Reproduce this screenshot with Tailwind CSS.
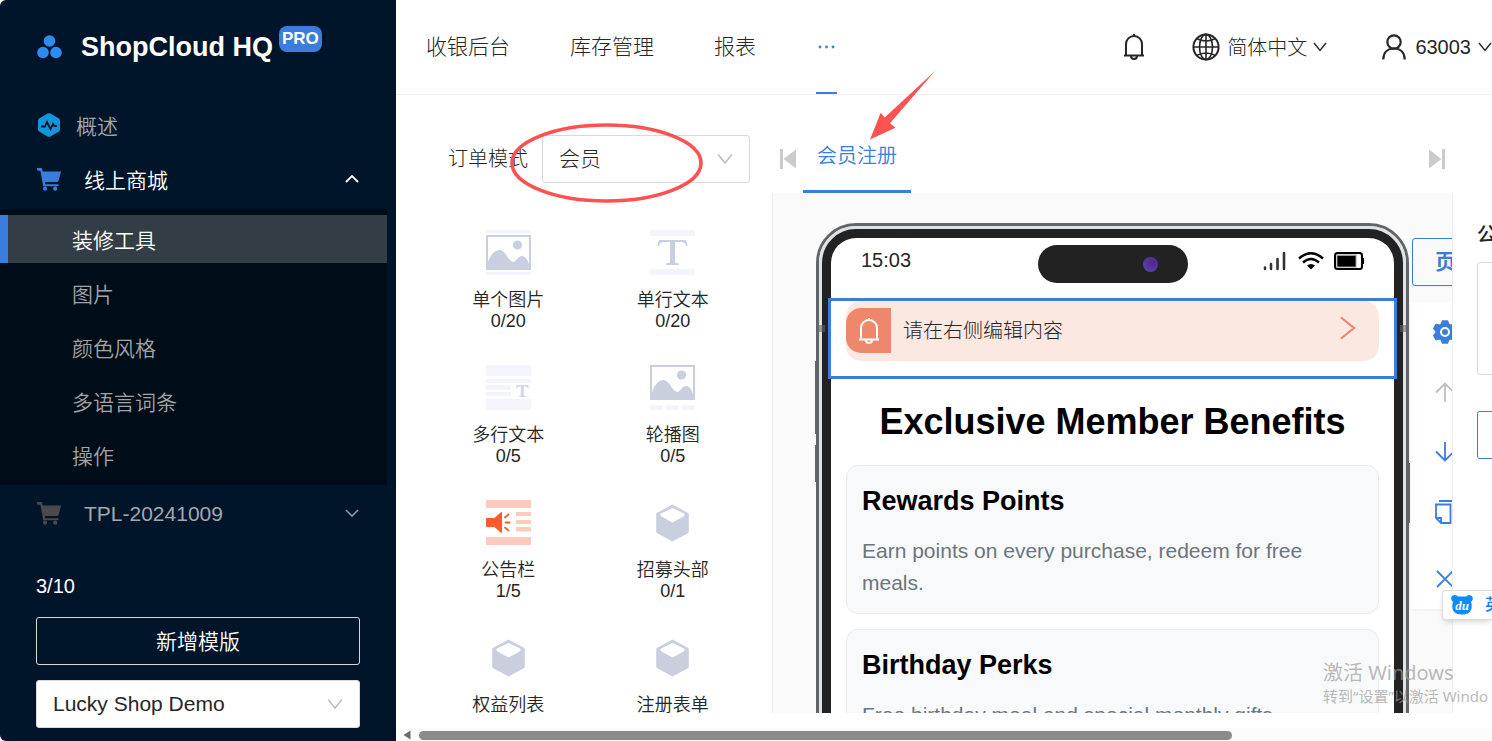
<!DOCTYPE html>
<html lang="zh-CN">
<head>
<meta charset="utf-8">
<title>ShopCloud HQ</title>
<script src="https://cdn.jsdelivr.net/npm/@tailwindcss/browser@4"></script>
</head>
<body class="relative flex h-screen overflow-hidden bg-white font-['Liberation_Sans','Noto_Sans_CJK_SC',sans-serif] font-light text-[#262626]">

<svg class="hidden">
  <symbol id="cart" viewBox="0 0 24 23"><path d="M0 0h4.200q.8 0 1 .8L5.700 3.500H24l-2.300 9a2 2 0 0 1-1.900 1.500H8l.3 2.200h13.200v2H6.200L3.400 2.800H.8Q0 2.400 0 1.500z"/><circle cx="8" cy="20.700" r="2.100"/><circle cx="18.200" cy="20.700" r="2.100"/></symbol>
  <symbol id="down" viewBox="0 0 14 10"><path d="M1 1l6 7.500L13 1" fill="none" stroke="currentColor" stroke-width="1.400"/></symbol>
  <symbol id="bell" viewBox="0 0 22 28"><path d="M11 1v2M3 22.500V11a8 8 0 0 1 16 0v11.500M1 22.500h20M8 23a3 3 0 0 0 6 0" fill="none" stroke="currentColor" stroke-width="2"/></symbol>
  <symbol id="cube" viewBox="0 0 45 45"><path fill="#cacfe0" fill-rule="evenodd" d="M22.500 4.600l15.300 8.200q1 .6 1 1.800v17q0 1.100-1 1.700l-15.300 8.300-15.300-8.300q-1-.6-1-1.700v-17q0-1.200 1-1.800zM22.500 8L11 13.500q-.8.600-.5 1.500.2 1 1 1.500L22.500 22.500l11-6q.8-.5 1-1.500.3-.9-.5-1.500z"/></symbol>
  <symbol id="photo" viewBox="0 0 45 35"><path d="M1 1h43v33H1z" fill="none" stroke="#cacfe0" stroke-width="2"/><path d="M2 27C5 19 9 15 13.500 15c6 0 9 12 14 12 3 0 4-6 8.500-6 3.500 0 5.500 4 7 8v5H2z" fill="#cacfe0"/><circle cx="31.500" cy="10" r="4.600" fill="#cacfe0"/></symbol>
</svg>

<aside class="flex w-[396px] shrink-0 flex-col rounded-l-md bg-[#001529] text-[21px] font-[350]">
  <div class="flex h-[94px] items-center pl-[37px]">
    <svg class="h-[24px] w-[25px]" viewBox="0 0 25 24" fill="#2d8cf0"><circle cx="12.500" cy="6" r="5.800"/><circle cx="6" cy="17.500" r="5.800"/><circle cx="19" cy="17.500" r="5.800"/></svg>
    <h1 class="ml-[19px] text-[27px] leading-8 font-bold text-white">ShopCloud HQ</h1>
    <span class="mb-4 ml-[6px] flex h-[26px] items-center rounded-lg bg-[#3b7ddd] px-[3px] text-[17px] font-bold text-white">PRO</span>
  </div>
  <nav class="pt-[7px]">
    <a href="#" class="flex h-[48px] items-center pl-[37px] text-[#a0a8b0]">
      <svg class="h-[24px] w-[24px]" viewBox="0 0 24 24"><path d="M10.500.6q1.500-.8 3 0l8 4.600q1.500.9 1.500 2.500v8.600q0 1.600-1.500 2.500l-8 4.600q-1.500.8-3 0l-8-4.600Q1 17.900 1 16.300V7.700q0-1.600 1.500-2.500z" fill="#1296db"/><path d="M4 13.500h4l2-4.500 3.500 7 2.500-5 1.500 2H20" fill="none" stroke="#001529" stroke-width="1.800"/></svg>
      <span class="ml-[15px] pt-[4px]">概述</span>
    </a>
    <button type="button" class="mt-[6px] flex h-[48px] w-full items-center pl-[37px] text-white">
      <svg class="h-[23px] w-[24px] fill-[#3b7ddd]"><use href="#cart"/></svg>
      <span class="ml-[23px] pt-[4px]">线上商城</span>
      <svg class="mr-[37px] ml-auto h-[10px] w-[14px]" viewBox="0 0 14 10"><path d="M1 8l6-6 6 6" fill="none" stroke="#fff" stroke-width="1.800"/></svg>
    </button>
    <div class="mt-[6px] mr-[9px] flex flex-col gap-[6px] bg-[#000c17] py-[6px] text-[#a0a4a8]">
      <a href="#" class="flex h-[48px] items-center border-l-8 border-[#3b7ddd] bg-[#333d45] pt-[4px] pl-[64px] text-white">装修工具</a>
      <a href="#" class="flex h-[48px] items-center pt-[4px] pl-[72px]">图片</a>
      <a href="#" class="flex h-[48px] items-center pt-[4px] pl-[72px]">颜色风格</a>
      <a href="#" class="flex h-[48px] items-center pt-[4px] pl-[72px]">多语言词条</a>
      <a href="#" class="flex h-[48px] items-center pt-[4px] pl-[72px]">操作</a>
    </div>
    <button type="button" class="mt-[4px] flex h-[48px] w-full items-center pl-[37px] text-[#a0a8b0]">
      <svg class="h-[23px] w-[24px] fill-[#4a4a4a]"><use href="#cart"/></svg>
      <span class="ml-[23px] pt-[2px]">TPL-20241009</span>
      <svg class="mr-[37px] ml-auto h-[10px] w-[14px]" viewBox="0 0 14 10"><path d="M1 2l6 6 6-6" fill="none" stroke="#8b939b" stroke-width="1.600"/></svg>
    </button>
  </nav>
  <div class="mt-auto flex flex-col gap-[15px] px-[36px] pb-[13px] text-white">
    <p class="text-[20px] leading-8">3/10</p>
    <button type="button" class="h-[48px] rounded-[3px] border border-[#d9d9d9] pt-[2px]">新增模版</button>
    <div class="relative">
      <select aria-label="店铺" class="h-[48px] w-full appearance-none rounded-[3px] border border-[#d9d9d9] bg-white pl-4 text-[#262626]"><option>Lucky Shop Demo</option></select>
      <svg class="pointer-events-none absolute top-[18px] right-[17px] h-[12px] w-[16px] text-[#bfbfbf]"><use href="#down"/></svg>
    </div>
  </div>
</aside>

<div class="flex min-w-0 flex-1 flex-col">
  <header class="flex h-[95px] shrink-0 items-center border-b border-[#f0f0f0] pl-[30px]">
    <nav class="flex h-full gap-[60px] text-[21px]">
      <a href="#" class="flex items-center">收银后台</a>
      <a href="#" class="flex items-center">库存管理</a>
      <a href="#" class="flex items-center">报表</a>
      <button type="button" aria-label="更多" class="flex w-[21px] items-center justify-center border-y-2 border-t-transparent border-b-[#3b7ddd]">
        <svg class="h-[4px] w-[17px]" viewBox="0 0 17 4" fill="#3b7ddd"><circle cx="2" cy="2" r="1.400"/><circle cx="8.500" cy="2" r="1.400"/><circle cx="15" cy="2" r="1.400"/></svg>
      </button>
    </nav>
    <div class="ml-auto flex items-center text-[20px]">
      <button type="button" aria-label="通知"><svg class="h-[28px] w-[22px]"><use href="#bell"/></svg></button>
      <button type="button" class="ml-[47px] flex items-center">
        <svg class="h-[28px] w-[28px]" viewBox="0 0 28 28" fill="none" stroke="#262626" stroke-width="1.600"><circle cx="14" cy="14" r="12.600" stroke-width="2"/><ellipse cx="14" cy="14" rx="6.500" ry="12.600"/><path d="M14 1v26M1 14h26M4.500 5.500q9.500 5 19 0M4.500 22.500q9.500-5 19 0"/></svg>
        <span class="ml-[7px] pt-[2px]">简体中文</span>
        <svg class="ml-[6px] h-[10px] w-[14px]"><use href="#down"/></svg>
      </button>
      <button type="button" class="ml-[55px] flex items-center">
        <svg class="h-[26px] w-[24px]" viewBox="0 0 24 26" fill="none" stroke="#262626" stroke-width="2.200"><circle cx="12" cy="8" r="6.700"/><path d="M1.300 25.500C1.300 18 6 14.500 12 14.500S22.700 18 22.700 25.500"/></svg>
        <span class="ml-[9px]">63003</span>
        <svg class="ml-[7px] h-[10px] w-[14px]"><use href="#down"/></svg>
      </button>
    </div>
  </header>

  <main class="flex min-h-0 flex-1 overflow-hidden">
    <section class="w-[376px] shrink-0 pt-[40px]">
      <div class="flex items-center pl-[52px]">
        <label for="mode" class="w-[94px] text-[20px]">订单模式</label>
        <div class="relative w-[208px]">
          <select id="mode" class="h-[48px] w-full appearance-none rounded-[3px] border border-[#d9d9d9] pl-4 text-[21px]"><option>会员</option></select>
          <svg class="pointer-events-none absolute top-[18px] right-[17px] h-[12px] w-[16px] text-[#bfbfbf]"><use href="#down"/></svg>
        </div>
      </div>
      <div class="mt-[47px] mr-[17px] ml-[30px] grid grid-cols-2 gap-y-[33px] text-[18px] leading-[21px] font-[350]">
        <button type="button" class="flex flex-col items-center">
          <svg class="mb-[15px] size-[45px]" viewBox="0 0 45 45"><path fill="#f4f5fa" d="M0 0h45v3H0zM0 42h45v3H0z"/><use href="#photo" y="5" width="45" height="35"/></svg>
          <span>单个图片</span><span>0/20</span>
        </button>
        <button type="button" class="flex flex-col items-center">
          <svg class="mb-[15px] size-[45px]" viewBox="0 0 45 45"><path fill="#f4f5fa" d="M0 0h45v6H0zM0 39h45v6H0z"/><path fill="#cacfe0" d="M9 10h27l1.500 6H36q-1.200-4-4.500-4H25v19.500q0 1.800 4 2V35H16v-1.500q4-.2 4-2V12h-6.500q-3.300 0-4.500 4H7.500z"/></svg>
          <span>单行文本</span><span>0/20</span>
        </button>
        <button type="button" class="flex flex-col items-center">
          <svg class="mb-[15px] size-[45px]" viewBox="0 0 45 45"><path fill="#f4f5fa" d="M0 0h45v11H0zM0 14h45v4H0zM0 20h25v5H0zM0 27h25v4H0zM0 34h45v11H0z"/><path fill="#d5d9e7" d="M30.500 20h11.500l.8 3.500h-1q-.5-2-2-2h-2V30q0 1 2 1v1h-7v-1q2 0 2-1v-8.500h-2q-1.500 0-2 2h-1z"/></svg>
          <span>多行文本</span><span>0/5</span>
        </button>
        <button type="button" class="flex flex-col items-center">
          <svg class="mb-[15px] size-[45px]" viewBox="0 0 45 45"><use href="#photo" width="45" height="35"/><path fill="#f4f5fa" d="M0 40.500h13V45H0zM16 40.500h13V45H16zM32 40.500h13V45H32z"/></svg>
          <span>轮播图</span><span>0/5</span>
        </button>
        <button type="button" class="flex flex-col items-center">
          <svg class="mb-[15px] size-[45px]" viewBox="0 0 45 45"><path fill="#fdcbbd" d="M0 0h45v8H0zM0 37h45v8H0zM30 12h15v4H30zM30 20h15v4H30zM30 27h15v4.500H30z"/><path fill="#ff5c2e" d="M1 18h7.500l5.500-5q1-1 2-1v21q-1 0-2-1l-5.500-5H1q-1 0-1-1v-7q0-1 1-1z"/><path stroke="#ff5c2e" stroke-width="1.800" stroke-linecap="round" d="M19 17.500l3.500-3.200M19.500 22.500H23.500M19 27.500l3.500 3.200"/></svg>
          <span>公告栏</span><span>1/5</span>
        </button>
        <button type="button" class="flex flex-col items-center">
          <svg class="mb-[15px] size-[45px]"><use href="#cube"/></svg>
          <span>招募头部</span><span>0/1</span>
        </button>
        <button type="button" class="flex flex-col items-center">
          <svg class="mb-[15px] size-[45px]"><use href="#cube"/></svg>
          <span>权益列表</span>
        </button>
        <button type="button" class="flex flex-col items-center">
          <svg class="mb-[15px] size-[45px]"><use href="#cube"/></svg>
          <span>注册表单</span>
        </button>
      </div>
    </section>

    <section class="flex min-w-0 flex-1 flex-col">
      <div class="flex h-[98px] shrink-0 items-end px-[8px] text-[20px]">
        <button type="button" aria-label="上一页" class="mb-[24px]"><svg class="h-[20px] w-[16px]" viewBox="0 0 16 20" fill="#cbcbcb"><path d="M0 0h3v20H0zM16 .5v19L3.500 10z"/></svg></button>
        <button type="button" class="ml-[7px] flex h-[62px] w-[108px] justify-center border-b-[3px] border-[#3b7ddd] pt-[10px] leading-[30px] font-[350] text-[#3b7ddd]">会员注册</button>
        <button type="button" aria-label="下一页" class="mb-[24px] ml-auto"><svg class="h-[20px] w-[16px]" viewBox="0 0 16 20" fill="#cbcbcb"><path d="M13 0h3v20h-3zM0 .5v19L12.500 10z"/></svg></button>
      </div>
      <div class="flex min-h-0 flex-1 items-start overflow-hidden border-x border-[#eee] bg-[#fafafa] pt-[30px] pl-[43px]">
        <div class="relative w-[593px] shrink-0 rounded-t-[40px] border-[3px] border-[#5f6569]">
          <i class="absolute top-[135px] -left-[4px] h-[73px] w-[2px] bg-[#5f6569]"></i>
          <i class="absolute top-[219px] -left-[4px] h-[37px] w-[2px] bg-[#5f6569]"></i>
          <i class="absolute top-[237px] -right-[4px] h-[60px] w-[2px] bg-[#5f6569]"></i>
          <div class="rounded-t-[37px] border-[3px] border-[#e0e3e5]">
            <div class="rounded-t-[34px] border-[9px] border-[#222] bg-[#222]">
              <div class="rounded-t-[25px] bg-white pb-8">
                <div class="grid h-[60px] grid-cols-[1fr_150px_1fr] items-start px-[30px] pt-[7px]">
                  <span class="text-[20px] leading-[30px]">15:03</span>
                  <span class="flex h-[38px] items-center rounded-full bg-[#222] pl-[105px]"><i class="size-[15px] rounded-full bg-radial-[at_65%_35%] from-[#5a1f96] to-[#4b55a0]"></i></span>
                  <span class="flex items-center justify-end gap-[10px] pt-[6px]">
                    <svg class="h-[20px] w-[26px]" viewBox="0 0 26 20" stroke="#333" stroke-width="2.600" stroke-linecap="round"><path d="M3 16.500v1.500M9 13v5M15.500 8v10M22 2v16"/></svg>
                    <svg class="h-[20px] w-[26px]" viewBox="0 0 26 20" fill="none" stroke="#000" stroke-width="2.400"><path d="M1 7.500q12-10.500 24 0M5 11.500q8-7 16 0"/><path d="M9 14.500q4-3 8 0l-4 4z" fill="#000" stroke="none"/></svg>
                    <svg class="h-[18px] w-[30px]" viewBox="0 0 30 18"><rect x="1" y="1" width="27" height="16" rx="2.500" fill="#fff" stroke="#000" stroke-width="2"/><path d="M2.500 2.500h20v13h-20z" fill="#999"/><path d="M3.500 4h18v10.500h-18zM28 6h2v6h-2z"/></svg>
                  </span>
                </div>
                <div class="relative -mx-[3px] border-[3px] border-[#3b7ddd] bg-white px-[15px] pb-[15px]">
                  <div class="flex h-[60px] items-center rounded-[15px] bg-[#fae8e1] pr-[23px]">
                    <span class="mt-[7px] flex size-[45px] items-center justify-center self-start rounded-l-[15px] bg-[#ee886c] text-white"><svg class="h-[28px] w-[22px]"><use href="#bell"/></svg></span>
                    <span class="ml-[12px] text-[20px]">请在右侧编辑内容</span>
                    <svg class="mb-[6px] ml-auto h-[24px] w-[16px]" viewBox="0 0 16 24"><path d="M1 1.500L14 12 1 22.500" fill="none" stroke="#ee886c" stroke-width="2.200"/></svg>
                  </div>
                </div>
                <h2 class="mt-[23px] text-center text-[36px] leading-10 font-bold text-black">Exclusive Member Benefits</h2>
                <div class="mx-[15px] mt-[23px] flex flex-col gap-[15px] text-[21px] leading-8 font-normal text-[#6c757d]">
                  <article class="rounded-xl border border-[#e9ecef] bg-[#f8f9fb] px-[15px] pt-[15px] pb-[14px]">
                    <h3 class="mb-[14px] text-[27px] leading-10 font-bold text-black">Rewards Points</h3>
                    <p>Earn points on every purchase, redeem for free meals.</p>
                  </article>
                  <article class="rounded-xl border border-[#e9ecef] bg-[#f8f9fb] px-[15px] pt-[15px] pb-[14px]">
                    <h3 class="mb-[14px] text-[27px] leading-10 font-bold text-black">Birthday Perks</h3>
                    <p>Free birthday meal and special monthly gifts.</p>
                  </article>
                </div>
              </div>
            </div>
          </div>
          <i class="absolute top-[99px] -left-[3px] h-[7px] w-[9px] bg-[#666]/60"></i>
          <i class="absolute top-[99px] -right-[3px] h-[7px] w-[9px] bg-[#666]/60"></i>
        </div>
        <div class="mt-[15px] ml-[2px] w-[68px] shrink-0">
          <button type="button" class="ml-[1px] flex h-[48px] w-[90px] items-center rounded-[3px] border border-[#3b7ddd] pl-[22px] text-[21px] font-bold whitespace-nowrap text-[#3b7ddd] shadow-xs">页</button>
          <div class="mt-[16px] flex flex-col bg-white text-[#3b7ddd] shadow-xs">
            <button type="button" aria-label="设置" class="flex h-[60px] items-center justify-center"><svg class="size-[24px]" viewBox="0 0 24 24"><path fill="currentColor" stroke="currentColor" stroke-width="1.500" stroke-linejoin="round" d="M9.500 1h5l1 3 2.300 1.300L21 4.600l2.300 4L21 11v2l2.300 2.400-2.300 4-3.200-.7L15.500 20l-1 3h-5l-1-3-2.300-1.300-3.200.7-2.300-4L3 13v-2L.7 8.600l2.300-4 3.200.7L8.500 4z"/><circle cx="12" cy="12" r="4" fill="currentColor" stroke="#fff" stroke-width="2"/></svg></button>
            <button type="button" aria-label="上移" class="flex h-[60px] items-center justify-center text-[#bfbfbf]"><svg class="size-[20px]" viewBox="0 0 20 20" fill="none" stroke="currentColor" stroke-width="1.800"><path d="M10 20V1.500M1 10.500l9-9 9 9"/></svg></button>
            <button type="button" aria-label="下移" class="flex h-[60px] items-center justify-center"><svg class="size-[20px]" viewBox="0 0 20 20" fill="none" stroke="currentColor" stroke-width="1.800"><path d="M10 0v18.500M1 9.500l9 9 9-9"/></svg></button>
            <button type="button" aria-label="复制" class="flex h-[60px] items-center justify-center"><svg class="h-[24px] w-[20px]" viewBox="0 0 20 24" fill="none" stroke="currentColor" stroke-width="1.800"><path d="M4 1h15v17M1 4.500h14.500v18.500H6L1 18zM1 18h5v5"/></svg></button>
            <button type="button" aria-label="删除" class="flex h-[67px] items-center justify-center pt-[7px]"><svg class="size-[18px]" viewBox="0 0 18 18" fill="none" stroke="currentColor" stroke-width="1.800"><path d="M1 1l16 16M17 1L1 17"/></svg></button>
          </div>
        </div>
      </div>
    </section>

    <section class="w-[39px] shrink-0 overflow-hidden pt-[124px] pl-[24px]">
      <h2 class="w-[60px] text-[20px] leading-8 font-medium">公</h2>
      <textarea aria-label="公告内容" class="mt-[11px] block h-[113px] w-[200px] resize-none rounded-[3px] border border-[#d9d9d9]"></textarea>
      <button type="button" aria-label="添加" class="mt-[36px] block h-[48px] w-[200px] rounded-[3px] border border-[#3b7ddd]"></button>
    </section>
  </main>

  <footer class="flex h-[28px] shrink-0 flex-col justify-end">
    <div class="flex h-[13px] items-center bg-[#fcfcfc] pt-[1px] pl-[7px]">
      <svg class="h-[10px] w-[8px]" viewBox="0 0 8 10" fill="#6b6b6b"><path d="M7.500.5v9L.5 5z"/></svg>
      <div class="ml-[8px] h-[9px] w-[76%] max-w-[813px] rounded-full bg-[#8b8b8b]"></div>
    </div>
  </footer>
</div>

<!-- Floating layers -->
<svg class="pointer-events-none absolute top-0 left-0 h-[210px] w-[960px]" viewBox="0 0 960 210"><ellipse cx="606.500" cy="163" rx="94.500" ry="38" fill="none" stroke="#fe5252" stroke-width="3.600"/><path fill="#fe5252" d="M870 139.500L880.700 112.700 884.700 117.500 935.500 70.500 890 123.300 895.500 127.700z"/></svg>
<div class="absolute top-[590px] right-0 flex h-[30px] w-[50px] items-center overflow-hidden rounded-l-[3px] border border-r-0 border-[#dcdcdc] bg-white pl-[8px] shadow-md">
  <svg class="h-[20px] w-[22px] shrink-0" viewBox="0 0 22 20"><path fill="#0a8cff" d="M3.500 0Q6 0 7 1.500h8Q16 0 18.500 0 22 .5 21.800 4q-.3 2-1.800 2.800 1.500 5 0 8.200-2 4.500-9 4.500T2 15Q.5 11.800 2 6.800.5 6 .2 4 0 .5 3.500 0z"/><text x="11" y="15" text-anchor="middle" font-family="Liberation Serif" font-style="italic" font-weight="bold" font-size="13" fill="#fff">du</text></svg>
  <span class="ml-[12px] shrink-0 text-[16px] font-medium text-[#0a7cff]">英</span>
</div>
<div class="pointer-events-none absolute right-0 bottom-[35px] w-[169px] overflow-hidden font-['Noto_Sans','Noto_Sans_CJK_SC',sans-serif] font-normal whitespace-nowrap text-[#9a9a9a]/70">
  <p class="text-[20px] leading-[27px]">激活 Windows</p>
  <p class="text-[15px] leading-[20px]">转到“设置”以激活 Windo</p>
</div>
</body>
</html>
